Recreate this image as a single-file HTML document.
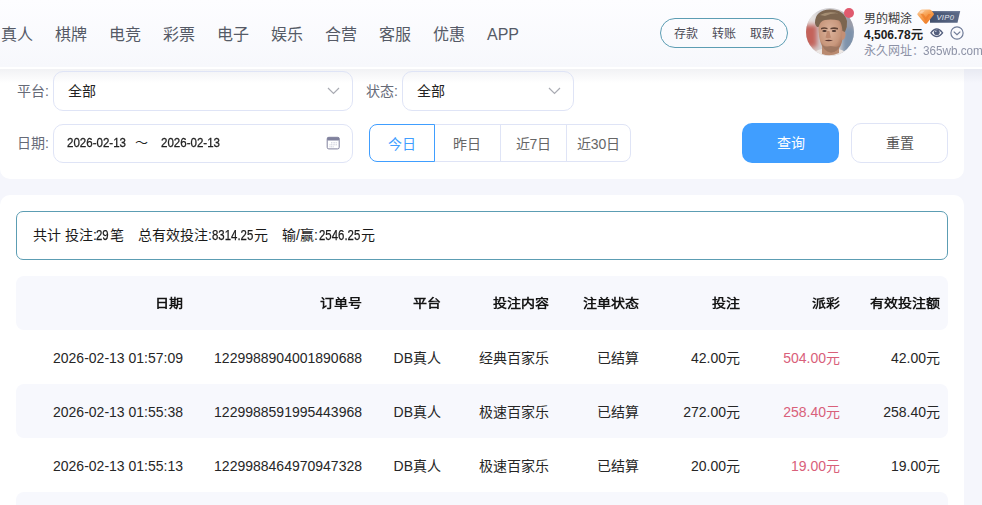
<!DOCTYPE html>
<html lang="zh-CN"><head><meta charset="utf-8">
<style>
*{box-sizing:border-box;margin:0;padding:0}
html,body{width:982px;height:505px;overflow:hidden;background:#f5f6fc;font-family:"Liberation Sans",sans-serif;color:#333}
div,span{position:absolute;white-space:nowrap}
#hdr{left:0;top:0;width:982px;height:67px;background:linear-gradient(#fdfdff,#f7f8fc)}
#hdrline{left:0;top:67px;width:982px;height:2px;background:#fff}
.nav{top:24px;font-size:16px;color:#555a66;line-height:22px}
.pill{left:660px;top:18px;width:128px;height:30px;border:1.3px solid #5c9db3;border-radius:15px}
.pill span{top:7px;font-size:12px;color:#4a4a55;line-height:16px}
#card1{left:0;top:69px;width:964px;height:110px;background:#fff;border-radius:0 0 10px 10px;overflow:hidden}
.sh{left:0;top:69px;width:982px;height:14px;background:linear-gradient(rgba(50,60,100,0.065),rgba(50,60,100,0))}
.lbl{font-size:14px;color:#666a77;line-height:20px}
.box{border:1px solid #dfe4f6;border-radius:10px}
.btxt{font-size:14px;color:#222;line-height:20px}
#card2{left:0;top:195px;width:964px;height:320px;background:#fff;border-radius:10px}
.seg{top:124px;height:38px;border:1px solid #dfe4f6;font-size:14px;color:#666;line-height:38px;text-align:center}
.sum{left:16px;top:211px;width:932px;height:49px;border:1.3px solid #5c9db3;border-radius:7px}
.th{left:16px;top:276px;width:932px;height:54px;background:#f7f8fd;border-radius:8px}
.rowbg{left:16px;width:932px;height:54px;background:#f7f8fd;border-radius:8px}
.c{font-size:14px;line-height:20px;text-align:right;color:#262626}
.h{font-weight:bold;color:#141414;transform:scaleY(0.89);transform-origin:50% 17px}
.red{color:#d9607a}
.sm{top:225px;font-size:14px;line-height:20px;color:#1a1a1a}
.sd{top:225px;font-size:14px;line-height:20px;color:#1a1a1a;transform:scaleX(0.815);transform-origin:0 0;-webkit-text-stroke:0.25px #1a1a1a}
.dt{top:133px;font-size:13.5px;transform:scaleX(0.855);transform-origin:0 0;-webkit-text-stroke:0.3px #222}
</style></head><body>
<div id="hdr"></div>
<div id="hdrline"></div>
<div class="nav" style="left:1px">真人</div>
<div class="nav" style="left:55px">棋牌</div>
<div class="nav" style="left:109px">电竞</div>
<div class="nav" style="left:163px">彩票</div>
<div class="nav" style="left:217px">电子</div>
<div class="nav" style="left:271px">娱乐</div>
<div class="nav" style="left:325px">合营</div>
<div class="nav" style="left:379px">客服</div>
<div class="nav" style="left:433px">优惠</div>
<div class="nav" style="left:487px">APP</div>
<div class="pill"><span style="left:13px">存款</span><span style="left:51px">转账</span><span style="left:89px">取款</span></div>

<!-- avatar -->
<svg style="position:absolute;left:806px;top:8px" width="48" height="48" viewBox="0 0 48 48">
<defs><clipPath id="cl"><circle cx="24" cy="24" r="24"/></clipPath>
<filter id="bl" x="-10%" y="-10%" width="120%" height="120%"><feGaussianBlur stdDeviation="0.7"/></filter>
<filter id="bl2" x="-50%" y="-50%" width="200%" height="200%"><feGaussianBlur stdDeviation="2.5"/></filter>
<radialGradient id="fg" cx="0.45" cy="0.4" r="0.6"><stop offset="0" stop-color="#dcb39b"/><stop offset="0.7" stop-color="#c8977c"/><stop offset="1" stop-color="#a9765e"/></radialGradient></defs>
<g clip-path="url(#cl)">
<rect width="48" height="48" fill="#cfcdd0"/>
<g filter="url(#bl2)">
<rect x="-4" y="0" width="14" height="16" fill="#e8e4e2"/>
<rect x="-4" y="16" width="15" height="24" fill="#c4625a"/>
<rect x="36" y="4" width="14" height="16" fill="#9a9ca8"/>
<rect x="36" y="20" width="14" height="26" fill="#7d92ab"/>
<rect x="-4" y="40" width="16" height="10" fill="#d9c9c4"/>
</g>
<g filter="url(#bl)">
<path d="M4 50 Q8 42 16 41 L32 41 Q40 42 44 50Z" fill="#ece6e3"/>
<path d="M16 36 L16 46 Q24 49 33 45 L33 34Z" fill="#b98a70"/>
<path d="M12.5 16 Q12 30 16 38 Q20 44.5 25 44.5 Q31 44 34.5 38 Q38 30 37 16 Q34 9 25 9 Q15 9 12.5 16Z" fill="url(#fg)"/>
<path d="M15 34 Q17 43 25 44.5 Q32 44 35 35 Q33 40 28 38.5 Q25 37.5 21 38.5 Q17 39 15 34Z" fill="#9c7560" opacity="0.9"/>
<path d="M35.5 23 Q39.5 22 39.5 27 Q39 32 35.5 32Z" fill="#c38f75"/>
<path d="M9 15 Q9 2 24 1.5 Q38 1.5 41 13 Q41.5 19 39 24 L36.5 23 Q36 15 33 12.5 Q26 11 19 12 Q14 13 12.5 19 L11 19 Q9 17 9 15Z" fill="#7b6550"/>
<path d="M14 7 Q22 2.5 33 5.5 Q26 4.5 19 8Z" fill="#a48d72"/>
<path d="M15 20 Q18 18.5 21.5 20 L21.5 21.3 Q18 20.3 15 21.5Z" fill="#5e4234"/>
<path d="M24.5 20 Q28 18.5 32 20 L32 21.5 Q28 20.5 24.5 21.3Z" fill="#5e4234"/>
<ellipse cx="18.5" cy="23" rx="2.2" ry="0.9" fill="#4c3630"/>
<ellipse cx="28" cy="23" rx="2.2" ry="0.9" fill="#4c3630"/>
<path d="M21 23 Q20 28 19.5 29.5 Q22 31 25 29.5 Q24 27 23.5 23Z" fill="#b98268" opacity="0.8"/>
<path d="M18.5 32.5 Q22 31.2 27 32.3 Q23 34.2 18.5 32.5Z" fill="#5a3630"/>
</g>
</g>
</svg>
<div style="left:844px;top:8px;width:10px;height:10px;border-radius:50%;background:#e05a6e"></div>

<div style="left:864px;top:11px;font-size:12px;line-height:16px;color:#3a3a3a">男的糊涂</div>
<svg style="position:absolute;left:916px;top:9px" width="46" height="16" viewBox="0 0 46 16">
<defs><linearGradient id="dg" x1="0" y1="0" x2="0.6" y2="1"><stop offset="0" stop-color="#fcd3a8"/><stop offset="0.5" stop-color="#f7a050"/><stop offset="1" stop-color="#ee7a25"/></linearGradient>
<linearGradient id="bg2" x1="0" x2="1"><stop offset="0" stop-color="#42506e"/><stop offset="1" stop-color="#5d6b88"/></linearGradient></defs>
<path d="M14 2 H44.2 L41.5 13.8 H14Z" fill="url(#bg2)"/>
<path d="M14 2.3 H44 L43.8 3.2 H14Z" fill="#8894ad" opacity="0.6"/>
<path d="M14 2 H44.2 L41.5 13.8 H14Z" fill="none"/><path d="M4.2 1.2 Q5 0.6 6 0.6 H13.5 Q14.5 0.6 15.3 1.3 L17.8 4.6 Q18.2 5.3 17.6 6 L11 14.2 Q9.8 15.4 8.6 14.2 L1.6 6 Q1 5.3 1.5 4.6Z" fill="url(#dg)"/>
<path d="M4.5 5 L9.8 12 L15 5 L12.3 5 L9.8 8.3 L7.3 5Z" fill="#ec7a28" opacity="0.7"/><path d="M3 4.3 L5.5 1.6 H9 L6 4.3Z" fill="#fff" opacity="0.35"/>
<text x="20.5" y="10.6" font-family="Liberation Sans" font-size="7.6" font-style="italic" fill="#e4e8f0" letter-spacing="0.3">VIP0</text>
</svg>
<div style="left:864px;top:27px;font-size:12px;line-height:16px;color:#1e1e1e;font-weight:bold">4,506.78元</div>
<svg style="position:absolute;left:930px;top:28px" width="14" height="10" viewBox="0 0 14 10">
<path d="M0.9 4.8 Q6.7 -2.9 12.6 4.8 Q6.7 12.5 0.9 4.8Z" fill="none" stroke="#525d7c" stroke-width="1.3"/>
<circle cx="6.8" cy="4.3" r="2.9" fill="#525d7c"/>
<circle cx="5.8" cy="3.2" r="0.8" fill="#c9cedb"/>
</svg>
<svg style="position:absolute;left:949px;top:25px" width="16" height="16" viewBox="0 0 16 16">
<circle cx="8" cy="8" r="6.1" fill="none" stroke="#6f7b97" stroke-width="1.2"/>
<path d="M4.7 6.6 L8 9.6 L11.3 6.6" fill="none" stroke="#6f7b97" stroke-width="1.2"/>
</svg>
<div style="left:864px;top:43px;font-size:12px;line-height:16px;color:#8d92a6">永久网址：</div><div style="left:922.5px;top:42.5px;font-size:13px;line-height:16px;color:#8d92a6;transform:scaleX(0.9);transform-origin:0 0">365wb.com</div>

<div id="card1"></div><div class="sh"></div>
<div class="lbl" style="left:17px;top:81px">平台:</div>
<div class="box" style="left:53px;top:71px;width:300px;height:40px"></div>
<div class="btxt" style="left:68px;top:81px">全部</div>
<svg style="position:absolute;left:327px;top:87px" width="13" height="8" viewBox="0 0 13 8"><path d="M1 1 L6.5 6.5 L12 1" fill="none" stroke="#a9abb3" stroke-width="1.2"/></svg>
<div class="lbl" style="left:366px;top:81px">状态:</div>
<div class="box" style="left:402px;top:71px;width:172px;height:40px"></div>
<div class="btxt" style="left:417px;top:81px">全部</div>
<svg style="position:absolute;left:548px;top:87px" width="13" height="8" viewBox="0 0 13 8"><path d="M1 1 L6.5 6.5 L12 1" fill="none" stroke="#a9abb3" stroke-width="1.2"/></svg>
<div class="lbl" style="left:17px;top:133px">日期:</div>
<div class="box" style="left:53px;top:124px;width:300px;height:39px"></div>
<div class="btxt dt" style="left:67px">2026-02-13</div><div class="btxt" style="left:135px;top:133px;font-size:13px">～</div><div class="btxt dt" style="left:161px">2026-02-13</div>
<svg style="position:absolute;left:326px;top:136px" width="14" height="14" viewBox="0 0 14 14">
<rect x="1.2" y="1.3" width="12" height="11.6" rx="1.6" fill="#fff" stroke="#80819d" stroke-width="1"/>
<rect x="1.2" y="1.3" width="12" height="3.2" rx="1" fill="#80819d"/>
<path d="M5 6.8 H11 M3.5 8.8 H11 M3.5 10.8 H8" stroke="#b9bacb" stroke-width="0.8" stroke-dasharray="1 0.6"/>
</svg>

<div class="seg" style="left:369px;width:66px;border-color:#409eff;color:#409eff;border-radius:8px 0 0 8px;z-index:2">今日</div>
<div class="seg" style="left:434px;width:67px;border-left:none">昨日</div>
<div class="seg" style="left:500px;width:67px">近7日</div>
<div class="seg" style="left:566px;width:65px;border-radius:0 8px 8px 0">近30日</div>

<div class="box" style="left:742px;top:123px;width:97px;height:40px;background:#409eff;border:none"></div>
<div class="btxt" style="left:777px;top:133px;color:#fff">查询</div>
<div class="box" style="left:851px;top:123px;width:97px;height:40px"></div>
<div class="btxt" style="left:886px;top:133px;color:#555">重置</div>

<div id="card2"></div>
<div class="sum"></div>
<div class="sm" style="left:33px">共计 投注:</div><div class="sd" style="left:96px">29</div><div class="sm" style="left:109.5px">笔</div>
<div class="sm" style="left:138px">总有效投注:</div><div class="sd" style="left:211.5px">8314.25</div><div class="sm" style="left:253.5px">元</div>
<div class="sm" style="left:282px">输/赢:</div><div class="sd" style="left:319.3px">2546.25</div><div class="sm" style="left:361px">元</div>

<div class="th"></div>
<div class="rowbg" style="top:384px"></div>
<div class="rowbg" style="top:492px"></div>

<div class="c h" style="left:83px;top:293px;width:100px">日期</div>
<div class="c h" style="left:262px;top:293px;width:100px">订单号</div>
<div class="c h" style="left:341px;top:293px;width:100px">平台</div>
<div class="c h" style="left:449px;top:293px;width:100px">投注内容</div>
<div class="c h" style="left:539px;top:293px;width:100px">注单状态</div>
<div class="c h" style="left:640px;top:293px;width:100px">投注</div>
<div class="c h" style="left:740px;top:293px;width:100px">派彩</div>
<div class="c h" style="left:840px;top:293px;width:100px">有效投注额</div>

<div class="c" style="left:23px;top:348px;width:160px">2026-02-13 01:57:09</div>
<div class="c" style="left:202px;top:348px;width:160px">1229988904001890688</div>
<div class="c" style="left:341px;top:348px;width:100px">DB真人</div>
<div class="c" style="left:449px;top:348px;width:100px">经典百家乐</div>
<div class="c" style="left:539px;top:348px;width:100px">已结算</div>
<div class="c" style="left:640px;top:348px;width:100px">42.00元</div>
<div class="c red" style="left:740px;top:348px;width:100px">504.00元</div>
<div class="c" style="left:840px;top:348px;width:100px">42.00元</div>

<div class="c" style="left:23px;top:402px;width:160px">2026-02-13 01:55:38</div>
<div class="c" style="left:202px;top:402px;width:160px">1229988591995443968</div>
<div class="c" style="left:341px;top:402px;width:100px">DB真人</div>
<div class="c" style="left:449px;top:402px;width:100px">极速百家乐</div>
<div class="c" style="left:539px;top:402px;width:100px">已结算</div>
<div class="c" style="left:640px;top:402px;width:100px">272.00元</div>
<div class="c red" style="left:740px;top:402px;width:100px">258.40元</div>
<div class="c" style="left:840px;top:402px;width:100px">258.40元</div>

<div class="c" style="left:23px;top:456px;width:160px">2026-02-13 01:55:13</div>
<div class="c" style="left:202px;top:456px;width:160px">1229988464970947328</div>
<div class="c" style="left:341px;top:456px;width:100px">DB真人</div>
<div class="c" style="left:449px;top:456px;width:100px">极速百家乐</div>
<div class="c" style="left:539px;top:456px;width:100px">已结算</div>
<div class="c" style="left:640px;top:456px;width:100px">20.00元</div>
<div class="c red" style="left:740px;top:456px;width:100px">19.00元</div>
<div class="c" style="left:840px;top:456px;width:100px">19.00元</div>
</body></html>
